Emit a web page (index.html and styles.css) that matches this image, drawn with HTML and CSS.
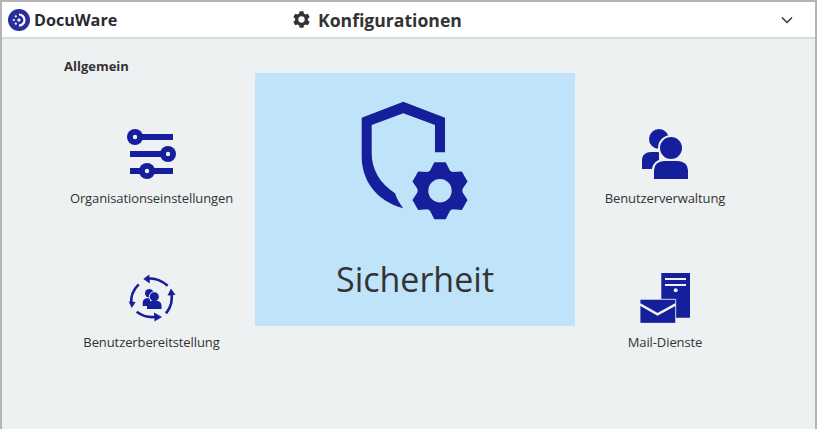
FILE: index.html
```html
<!DOCTYPE html>
<html lang="de">
  <head>
    <meta charset="UTF-8" />
    <title>DocuWare - Konfigurationen</title>
    <link rel="stylesheet" href="styles.css">
  </head>
  <body>
    <div class="window">
      <header>
        <div class="logo">
          <svg class="logo-mark" viewBox="0 0 22 22" aria-hidden="true">
            <circle cx="11" cy="11" r="11" fill="#2b2f9e" />
            <path d="M11 5.500a5.500 5.500 0 0 1 0 11" fill="none" stroke="#fff" stroke-width="2.200" />
            <circle cx="11" cy="11" r="1.600" fill="#fff" />
            <circle cx="5.800" cy="11" r="1.100" fill="#fff" />
            <circle cx="7.800" cy="7.300" r="1.100" fill="#fff" />
            <circle cx="7.800" cy="14.700" r="1.100" fill="#fff" />
          </svg>
          <span class="logo-text">DocuWare</span>
        </div>
        <div class="title">
          <svg class="title-icon" viewBox="0 0 24 24" aria-hidden="true">
            <path fill-rule="evenodd" fill="#333" d="M9.600 1.500h4.800l.6 3 2 1.200 2.900-1 2.400 4.200-2.300 2v2.200l2.300 2-2.400 4.200-2.900-1-2 1.200-.6 3H9.600l-.6-3-2-1.200-2.900 1-2.400-4.200 2.300-2v-2.200l-2.300-2 2.400-4.200 2.900 1 2-1.200zM12 8a4 4 0 1 0 0 8 4 4 0 0 0 0-8z" />
          </svg>
          <span>Konfigurationen</span>
        </div>
        <svg class="chevron" viewBox="0 0 12 8" aria-hidden="true">
          <path d="M1 1.500l5 5 5-5" fill="none" stroke="#333" stroke-width="1.500" />
        </svg>
      </header>

      <main>
        <h2 class="section-title">Allgemein</h2>
        <div class="tiles">
          <a class="tile tile-left" href="#">
            <svg class="tile-icon" viewBox="0 0 50 50" aria-hidden="true">
              <g fill="#151f9c">
                <path d="M7 5h39v6H7z" />
                <circle cx="8" cy="8" r="8" />
                <path d="M3 22h40v6H3z" />
                <circle cx="41" cy="25" r="8" />
                <path d="M3 39h43v6H3z" />
                <circle cx="20" cy="42" r="8" />
              </g>
              <circle cx="8" cy="8" r="2.200" fill="#edf1f2" />
              <circle cx="41" cy="25" r="2.200" fill="#edf1f2" />
              <circle cx="20" cy="42" r="2.200" fill="#edf1f2" />
            </svg>
            <span>Organisationseinstellungen</span>
          </a>
          <a class="tile-active" href="#">
            <svg class="hero-icon" viewBox="0 0 110 120" aria-hidden="true">
              <path fill="#151f9c" d="M43.300 1.700L85 17.700v34.600H75V25L43.300 13.300 11.700 25v28.300c0 16 8 30 23.300 40 2 6 5 11 8.300 15C16 101 1.700 80 1.700 56.700v-39z" />
              <g fill="#151f9c" transform="translate(80 90.700)">
                <circle r="22.500" />
                <polygon points="-5.700,-28.500 5.700,-28.500 10,-20 10,20 5.700,28.500 -5.700,28.500 -10,20 -10,-20" />
                <polygon points="-5.700,-28.500 5.700,-28.500 10,-20 10,20 5.700,28.500 -5.700,28.500 -10,20 -10,-20" transform="rotate(60)" />
                <polygon points="-5.700,-28.500 5.700,-28.500 10,-20 10,20 5.700,28.500 -5.700,28.500 -10,20 -10,-20" transform="rotate(120)" />
                <circle r="11.700" fill="#bfe3f9" />
              </g>
            </svg>
            <span>Sicherheit</span>
          </a>
          <a class="tile" href="#">
            <svg class="tile-icon" viewBox="0 0 50 50" aria-hidden="true">
              <g fill="#151f9c">
                <circle cx="19" cy="10" r="10" />
                <path d="M2 40V31c0-5 4-8 9-8h8v17z" />
              </g>
              <circle cx="31" cy="19" r="12" fill="#151f9c" stroke="#edf1f2" stroke-width="2" />
              <path d="M13 51V41c0-6 5-10 11-10h14c6 0 11 4 11 10v10z" fill="#151f9c" stroke="#edf1f2" stroke-width="2" />
            </svg>
            <span>Benutzerverwaltung</span>
          </a>
          <a class="tile tile-left tile-provision" href="#">
            <svg class="tile-icon" viewBox="0 0 50 50" aria-hidden="true">
              <g fill="none" stroke="#151f9c" stroke-width="2.600">
                <path d="M19 6c7-1.500 15 1 21.700 6.700" />
                <path d="M11.700 11.300C6 17 3.700 24 4.300 30" />
                <path d="M9.700 38.700c6 4.500 13 6.300 20 5" />
                <path d="M39 40.300c5-6 7-14 5-22" />
              </g>
              <g fill="#151f9c">
                <path d="M16.300 6l6-4.500 .6 9z" />
                <path d="M1.700 28.500l7 .5-4 6z" />
                <path d="M35 44l-7.500 4.500-.5-9z" />
                <path d="M44 15.500l4.500 6.500-8 .5z" />
                <circle cx="22.300" cy="20.300" r="4.300" />
                <path d="M15.700 33v-3.500c0-2.500 2-4.200 4.300-4.200h3V33z" />
                <circle cx="27.300" cy="23.700" r="5" fill="#151f9c" stroke="#edf1f2" />
                <path d="M20 36v-3.500c0-3 2-4.500 4.500-4.500h5.500c2.500 0 4.500 1.500 4.500 4.500V36z" />
              </g>
            </svg>
            <span>Benutzerbereitstellung</span>
          </a>
          <a class="tile tile-mail" href="#">
            <svg class="tile-icon" viewBox="0 0 50 50" aria-hidden="true">
              <path d="M21.300 0H50v44.700H35.700V26.300H21.300z" fill="#151f9c" />
              <path d="M25 6h21M25 12h21" stroke="#edf1f2" stroke-width="2" />
              <circle cx="35.700" cy="17.300" r="2" fill="#edf1f2" />
              <path d="M0 26.300h35.700v24H0z" fill="#151f9c" stroke="#edf1f2" stroke-width=".8" />
              <path d="M0 31.300l17.500 10 18.200-10" fill="none" stroke="#edf1f2" stroke-width="2.500" />
            </svg>
            <span>Mail-Dienste</span>
          </a>
        </div>
      </main>
    </div>
  </body>
</html>
```

FILE: styles.css
```css
* {
  margin: 0;
  padding: 0;
  box-sizing: border-box;
  font-family: "Open Sans", "Noto Sans", sans-serif;
}
html,
body {
  width: 817px;
  height: 432px;
  overflow: hidden;
  background: #fff;
}
a {
  color: inherit;
  text-decoration: none;
}

.window {
  height: 429px;
  display: flex;
  flex-direction: column;
  border-top: 2px solid #b4b4b4;
  border-left: 2px solid #b4b4b4;
  border-right: 2px solid #b4b4b4;
  background: #edf1f2;
  color: #333;
}

/* Header */
header {
  height: 37px;
  flex-shrink: 0;
  display: flex;
  align-items: center;
  background: #fff;
  border-bottom: 2px solid #d9dcde;
  padding: 0 22px 0 6px;
}
.logo {
  width: 284px;
  display: flex;
  align-items: center;
  gap: 4px;
}
.logo-mark {
  width: 22px;
  height: 22px;
}
.logo-text {
  font-size: 16.2px;
  font-weight: 700;
  color: #2a2a33;
}
.title {
  display: flex;
  align-items: center;
  gap: 7px;
  font-size: 17.6px;
  font-weight: 700;
  flex-grow: 1;
}
.title-icon {
  width: 19px;
  height: 19px;
}
.chevron {
  width: 12px;
  height: 8px;
}

/* Tiles */
main {
  flex-grow: 1;
  padding: 18px 60px 0 62px;
}
.section-title {
  font-size: 13px;
  font-weight: 700;
  line-height: 18px;
}
.tiles {
  display: grid;
  grid-template-columns: 191px 320px 180px;
  grid-template-rows: 144px 144px;
  margin-top: -2px;
}
.tile {
  display: flex;
  flex-direction: column;
  align-items: center;
  padding-top: 56px;
  font-size: 13px;
  letter-spacing: -0.1px;
  line-height: 18px;
  white-space: nowrap;
}
.tile-left {
  width: 175px;
}
.tile-icon {
  width: 50px;
  height: 50px;
  margin-bottom: 10px;
}
.tile-provision {
  grid-column: 1;
  grid-row: 2;
}
.tile-mail {
  grid-column: 3;
  grid-row: 2;
}
.tile-active {
  grid-column: 2;
  grid-row: 1 / 3;
  height: 253px;
  display: flex;
  flex-direction: column;
  align-items: center;
  background: #bfe3f9;
  padding-top: 27px;
  font-size: 34px;
  line-height: 46px;
}
.hero-icon {
  width: 110px;
  height: 120px;
  margin-bottom: 36px;
}
```
